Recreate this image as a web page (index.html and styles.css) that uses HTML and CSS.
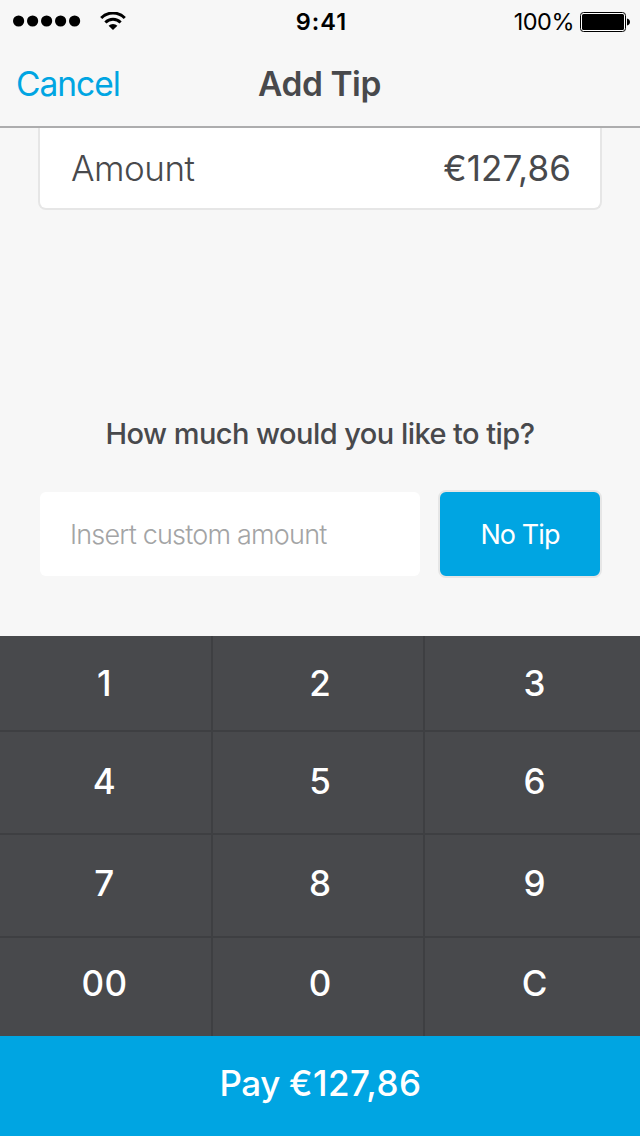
FILE: index.html
```html
<!DOCTYPE html>
<html lang="en">
<head>
<meta charset="utf-8">
<title>Add Tip</title>
<link rel="stylesheet" href="styles.css">
</head>
<body>
<div class="screen">
  <header class="header">
    <div class="status">
      <div class="status-left">
        <svg class="signal" width="68" height="12" viewBox="0 0 68 12"><circle cx="5.6" cy="6" r="5.6"/><circle cx="19.6" cy="6" r="5.6"/><circle cx="33.6" cy="6" r="5.6"/><circle cx="47.6" cy="6" r="5.6"/><circle cx="61.6" cy="6" r="5.6"/></svg>
        <svg class="wifi" width="26" height="18" viewBox="0 0 26 18"><path d="M1.2 6a16.5 16.5 0 0 1 23.6 0" fill="none" stroke="#000" stroke-width="3"/><path d="M5.4 10.5a10.7 10.7 0 0 1 15.2 0" fill="none" stroke="#000" stroke-width="3"/><path d="M13 18l-4.400-4.200a6.200 6.200 0 0 1 8.800 0z"/></svg>
      </div>
      <div class="time">9:41</div>
      <div class="status-right">
        <span class="percent">100%</span>
        <svg class="battery" width="50" height="20" viewBox="0 0 50 20"><rect x=".5" y=".5" width="45" height="19" rx="3" fill="#fff" stroke="#000"/><rect x="2" y="2" width="42" height="16" rx="1.5"/><path d="M47 6.500c1.800.3 3 1.700 3 3.500s-1.200 3.200-3 3.500z"/></svg>
      </div>
    </div>
    <nav class="nav">
      <a class="cancel">Cancel</a>
      <h1 class="title">Add Tip</h1>
    </nav>
  </header>
  <main class="content">
    <section class="amount-card">
      <span class="amount-label">Amount</span>
      <span class="amount-value">€127,86</span>
    </section>
    <h2 class="question">How much would you like to tip?</h2>
    <div class="tip-row">
      <div class="field"><span class="placeholder">Insert custom amount</span></div>
      <div class="no-tip"><span class="no-tip-text">No Tip</span></div>
    </div>
  </main>
  <section class="keypad">
    <div class="key">1</div><div class="key">2</div><div class="key">3</div>
    <div class="key row2">4</div><div class="key row2">5</div><div class="key row2">6</div>
    <div class="key row3">7</div><div class="key row3">8</div><div class="key row3">9</div>
    <div class="key row4">00</div><div class="key row4">0</div><div class="key row4">C</div>
  </section>
  <div class="pay"><span class="pay-text">Pay <span class="pay-sum">€127,86</span></span></div>
</div>
</body>
</html>
```

FILE: styles.css
```css
* { box-sizing: border-box; }
body { margin: 0; font-family: Inter, "Liberation Sans", sans-serif; color: #48494c; }
.screen { width: 640px; height: 1136px; display: flex; flex-direction: column; background: #f7f7f7; overflow: hidden; white-space: nowrap; }
.header { height: 128px; flex: none; border-bottom: 2px solid #adadae; }
.status { height: 43px; display: grid; grid-template-columns: 1fr auto 1fr; align-items: center; color: #000; padding: 0 10px 0 13px; }
.status-left { display: flex; align-items: center; gap: 19px; }
.signal { margin-top: -1px; }
.wifi { margin-top: -1px; }
.time { font-size: 23.5px; font-weight: 600; line-height: 43px; letter-spacing: 1px; }
.status-right { display: flex; justify-content: flex-end; align-items: center; gap: 6px; }
.percent { font-size: 23.5px; line-height: 43px; letter-spacing: -0.5px; font-weight: 400; }
.battery { margin-top: 1px; }
.nav { height: 83px; display: grid; grid-template-columns: 1fr auto 1fr; align-items: center; padding: 0 17px 2px 16px; }
.cancel { font-size: 33.5px; font-weight: 400; letter-spacing: -1px; color: #00a5e2; }
.title { margin: 0; font-size: 33.5px; font-weight: 600; letter-spacing: -0.45px; }
.content { height: 508px; flex: none; display: flex; flex-direction: column; padding: 0 38px; }
.amount-card { height: 82px; display: flex; justify-content: space-between; align-items: center; padding: 0 29px 1px 31px; background: #fff; border: 2px solid #e6e6e6; border-top: 0; border-radius: 0 0 8px 8px; }
.amount-label { font-size: 35px; font-weight: 300; letter-spacing: -0.5px; }
.amount-value { font-size: 35px; font-weight: 400; letter-spacing: 0.1px; }
.question { margin: 203px 0 0; height: 41px; line-height: 41px; font-size: 29px; font-weight: 500; letter-spacing: -0.55px; text-align: center; }
.tip-row { display: flex; gap: 18px; margin-top: 36px; padding-left: 2px; }
.field { width: 380px; height: 84px; margin-top: 2px; border-radius: 6px; background: #fff; display: flex; align-items: center; padding-left: 30px; }
.placeholder { font-size: 27px; font-weight: 300; letter-spacing: -0.8px; color: #a3a4a5; }
.no-tip { width: 164px; height: 88px; border: 2px solid #e6e6e6; border-radius: 8px; background: #00a5e2; color: #fff; display: flex; align-items: center; justify-content: center; }
.no-tip-text { font-size: 27px; font-weight: 400; letter-spacing: -0.9px; }
.keypad { height: 400px; flex: none; display: grid; grid-template-columns: 211px 210px 215px; grid-template-rows: 94px 101px 101px 98px; gap: 2px; background: #3e3f42; }
.key { display: flex; align-items: center; justify-content: center; background: #48494c; color: #fff; font-size: 35px; font-weight: 500; padding-left: 4px; padding-bottom: 1px; }
.key:nth-child(3n+1) { padding-left: 0; padding-right: 2px; letter-spacing: 0.3px; }
.row2 { padding-bottom: 4px; }
.row3 { padding-bottom: 6px; }
.row4 { padding-bottom: 9px; }
.pay { height: 100px; flex: none; display: flex; align-items: center; justify-content: center; padding: 0 0 7px 1px; background: #00a5e2; color: #fff; }
.pay-text { font-size: 35px; font-weight: 500; letter-spacing: -0.4px; }
.pay-sum { letter-spacing: 0.5px; }
```
